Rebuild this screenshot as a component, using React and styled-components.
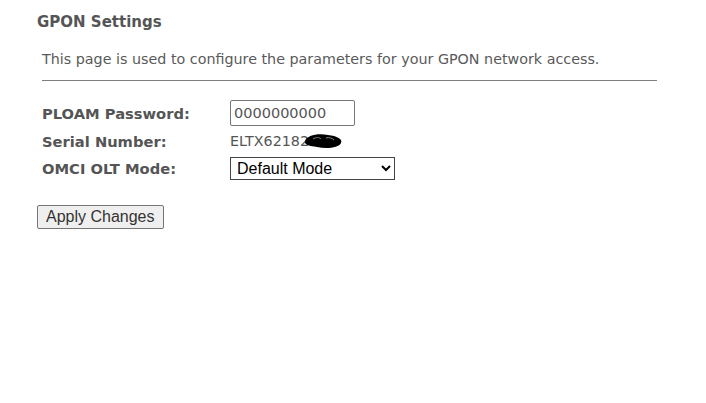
import React from 'react';
import styled, { createGlobalStyle } from 'styled-components';

const GlobalStyle = createGlobalStyle`
  html, body {
    margin: 0;
    background: #ffffff;
  }
  body {
    font-family: "DejaVu Sans", Verdana, sans-serif;
    color: #555555;
  }
`;

const Page = styled.div`
  width: 706px;
  height: 403px;
  padding: 12px 0 0 37px;
  box-sizing: border-box;
`;

const Title = styled.h1`
  margin: 0;
  font-size: 15px;
  font-weight: bold;
  color: #555555;
  line-height: 20px;
`;

const Intro = styled.p`
  margin: 17px 0 0 5px;
  width: 615px;
  font-size: 14.3px;
  line-height: 20px;
  color: #5a5a5a;
  padding-bottom: 11px;
  border-bottom: 1px solid #7f7f7f;
`;

const Form = styled.div`
  display: grid;
  grid-template-columns: 188px auto;
  grid-template-rows: 26px 26px 24px;
  align-items: center;
  row-gap: 2px;
  margin: 19px 0 0 5px;
`;

const Label = styled.div`
  font-size: 14.7px;
  font-weight: bold;
  color: #555555;
`;

const TextInput = styled.input`
  width: 125px;
  height: 26px;
  box-sizing: border-box;
  border: 1px solid #767676;
  border-radius: 2px;
  padding: 0 3px;
  font-family: "DejaVu Sans", Verdana, sans-serif;
  font-size: 14.5px;
  color: #555555;
  justify-self: start;
`;

const Serial = styled.span`
  position: relative;
  font-size: 14.3px;
  color: #555555;
  justify-self: start;
`;

const Redact = styled.svg`
  position: absolute;
  left: 74px;
  top: -1px;
`;

const Select = styled.select`
  width: 165px;
  height: 23px;
  box-sizing: border-box;
  border: 1px solid #444;
  border-radius: 0;
  background: #fff;
  font-family: "Liberation Sans", Arial, sans-serif;
  font-size: 16px;
  color: #000;
  padding: 0 2px;
  justify-self: start;
`;

const Button = styled.button`
  display: block;
  margin-top: 25px;
  height: 24px;
  padding: 0 8px;
  font-family: "Liberation Sans", Arial, sans-serif;
  font-size: 16px;
  color: #333;
  background: #efefef;
  border: 1px solid #767676;
  border-radius: 2px;
`;

export default function App() {
  return (
    <>
      <GlobalStyle />
      <Page>
        <Title>GPON Settings</Title>
        <Intro>This page is used to configure the parameters for your GPON network access.</Intro>
        <Form>
          <Label>PLOAM Password:</Label>
          <TextInput defaultValue="0000000000" />
          <Label>Serial Number:</Label>
          <Serial>
            ELTX62182
            <Redact width="40" height="18" viewBox="0 0 40 18">
              <path d="M1 9 C3 3 14 1 24 3 C33 4 39 7 37 11 C35 16 22 17 13 15 C6 14 0 13 1 9 Z" fill="#000" />
              <path d="M9 7 C12 5 15 5 17 7 M22 6 C25 5 28 6 30 8" stroke="#888" strokeWidth="1" fill="none" />
            </Redact>
          </Serial>
          <Label>OMCI OLT Mode:</Label>
          <Select defaultValue="default">
            <option value="default">Default Mode</option>
          </Select>
        </Form>
        <Button>Apply Changes</Button>
      </Page>
    </>
  );
}
